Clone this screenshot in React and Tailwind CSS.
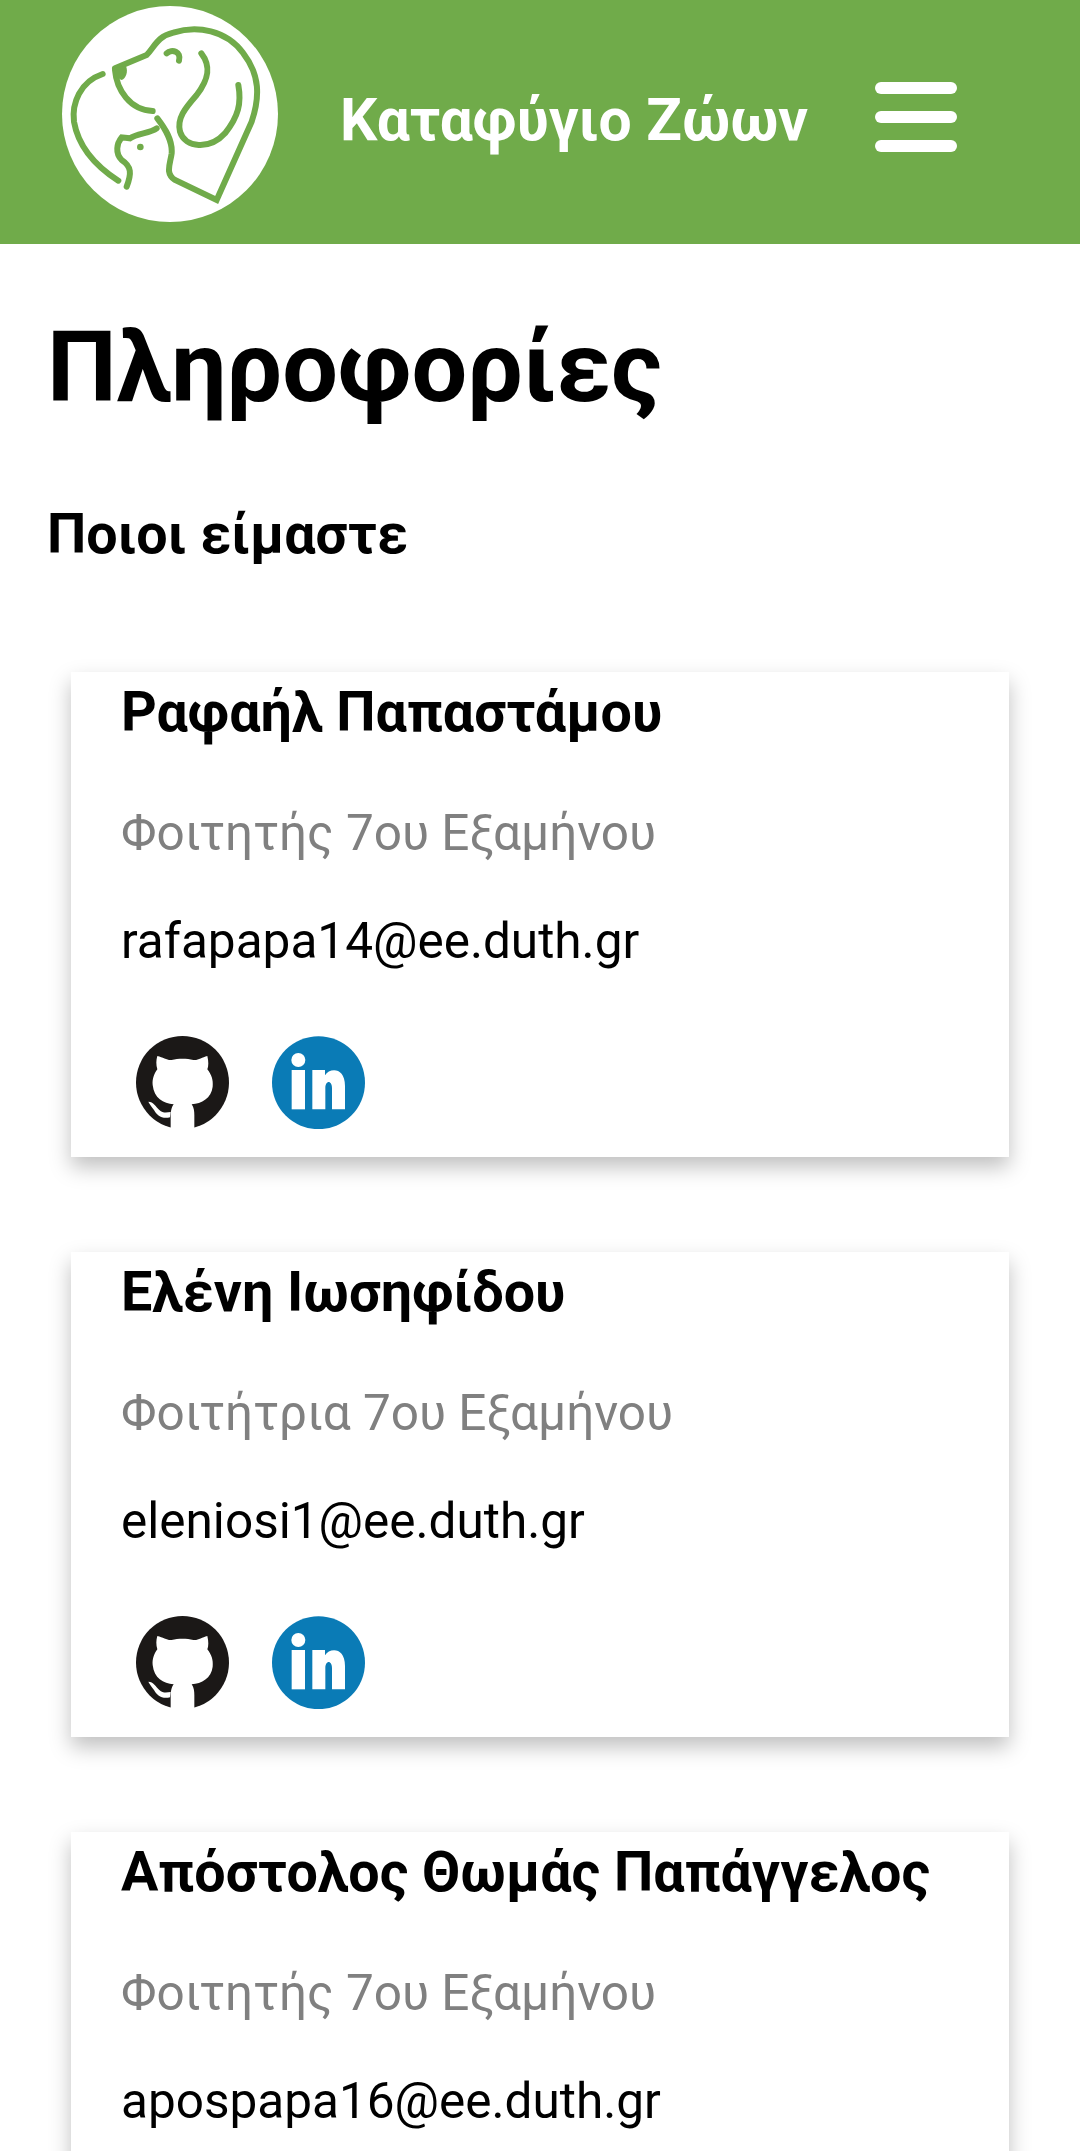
const people = [
  { name: 'Ραφαήλ Παπαστάμου', role: 'Φοιτητής 7ου Εξαμήνου', email: 'rafapapa14@ee.duth.gr' },
  { name: 'Ελένη Ιωσηφίδου', role: 'Φοιτήτρια 7ου Εξαμήνου', email: 'eleniosi1@ee.duth.gr' },
  { name: 'Απόστολος Θωμάς Παπάγγελος', role: 'Φοιτητής 7ου Εξαμήνου', email: 'apospapa16@ee.duth.gr' },
]

function Logo() {
  return (
    <svg viewBox="186 18 648 648" className="w-[216px] h-[216px] shrink-0">
      <circle cx="510" cy="342" r="324" fill="#fff" />
      <g fill="none" stroke="#70ab4a" strokeWidth="18" strokeLinecap="round" strokeLinejoin="miter">
        <path d="M345 205 L440 165 C465 140 470 110 520 98 C590 75 680 90 730 160 C780 225 780 290 755 365 L650 600 L525 540 C495 520 510 495 515 460 C518 420 495 385 472 355" />
        <path d="M345 210 C350 270 390 330 458 333" />
        <path d="M500 160 C515 145 545 155 537 182" />
        <path d="M604 160 C635 200 625 240 590 285 C555 325 530 355 540 395 C555 445 630 450 675 400 C715 350 725 310 715 255" />
        <path d="M308 222 C240 245 215 310 222 365 C235 440 290 500 355 542" />
        <path d="M470 385 C450 400 410 400 390 415 L365 412 C350 430 345 460 365 480 C395 500 395 520 380 560" />
      </g>
      <path d="M342 205 L378 198 C385 215 378 235 365 240 C350 235 340 220 342 205Z" fill="#70ab4a" />
      <circle cx="421" cy="441" r="10" fill="#70ab4a" />
    </svg>
  )
}

function GithubMark() {
  return (
    <svg viewBox="258 108 279 279" className="w-[93px] h-[93px]">
      <circle cx="397.5" cy="247.5" r="139.5" fill="#1b1817" />
      <path fill="#fff" d="M322 168 C340 172 352 182 365 180 C385 175 410 175 430 180 C445 182 455 172 472 168 C476 185 476 198 472 208 C485 225 490 240 488 260 C484 295 455 310 425 313 C432 322 433 335 433 345 V387 H362 V345 C362 338 364 322 371 313 C340 310 312 295 308 255 C306 238 312 222 322 208 C318 195 318 180 322 168Z" />
      <path fill="#fff" d="M295 305 C310 305 318 320 328 330 C338 340 350 338 362 336 L360 352 C335 358 320 345 312 330 C305 320 298 312 295 305Z" />
    </svg>
  )
}

function LinkedinMark() {
  return (
    <svg viewBox="666 108 279 279" className="w-[93px] h-[93px]">
      <circle cx="805.5" cy="248" r="139.5" fill="#0a7bb6" />
      <circle cx="745" cy="180" r="21" fill="#fff" />
      <rect x="725" y="210" width="40" height="118" fill="#fff" />
      <path d="M787 210 H825 V226 C838 204 885 200 885 258 V328 H846 V265 C846 240 826 240 826 265 V328 H787Z" fill="#fff" />
    </svg>
  )
}

function PersonCard({ person }) {
  return (
    <div className="mx-[24px] mb-[95px] h-[485px] bg-white pl-[50px] shadow-[0_10px_20px_rgba(0,0,0,0.25)]">
      <h3 className="text-[55.6px] font-bold leading-[64px] h-[64px] pt-[8px] whitespace-nowrap">{person.name}</h3>
      <p className="mt-[69px] text-[49.5px] leading-[56px] text-[#808080]">{person.role}</p>
      <p className="mt-[52px] text-[49.5px] leading-[56px] text-black">{person.email}</p>
      <div className="mt-[67px] ml-[15px] flex gap-[43px]">
        <GithubMark />
        <LinkedinMark />
      </div>
    </div>
  )
}

export default function App() {
  return (
    <div className="w-[1080px] h-[2151px] overflow-hidden bg-white text-black font-['Roboto',sans-serif]">
      <header className="h-[244px] bg-[#70ab4a] flex items-start pl-[62px] pt-[6px]">
        <Logo />
        <div className="ml-[62px] mt-[81px] text-white text-[58.8px] font-bold leading-[66px] whitespace-nowrap">Καταφύγιο Ζώων</div>
        <div className="ml-[67px] mt-[76px] w-[82px] flex flex-col gap-[17px]">
          <span className="h-[12px] rounded-full bg-white" />
          <span className="h-[12px] rounded-full bg-white" />
          <span className="h-[12px] rounded-full bg-white" />
        </div>
      </header>

      <main className="px-[47px]">
        <h1 className="mt-[67px] text-[98.7px] font-bold leading-[112px]">Πληροφορίες</h1>
        <h2 className="mt-[79px] text-[55.6px] font-bold leading-[64px]">Ποιοι είμαστε</h2>
        <div className="mt-[106px]">
          {people.map(p => <PersonCard key={p.email} person={p} />)}
        </div>
      </main>
    </div>
  )
}
